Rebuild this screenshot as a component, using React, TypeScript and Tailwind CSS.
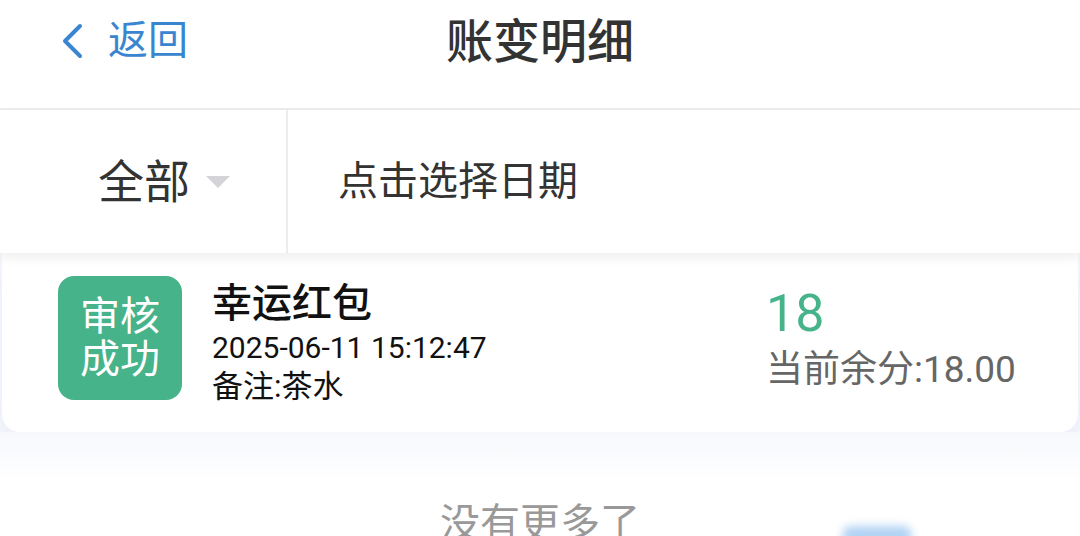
import React from 'react';

const font = { fontFamily: '"Roboto", "Noto Sans CJK SC", sans-serif' };

const record = {
  status: ['审核', '成功'],
  title: '幸运红包',
  time: '2025-06-11 15:12:47',
  note: '茶水',
  amount: '18',
  balance: '18.00',
};

export default function App() {
  return (
    <div
      className="w-[1080px] h-[536px] overflow-hidden bg-white relative"
      style={font}
    >
      {/* header */}
      <div className="h-[110px] flex items-center pb-[26px] border-b-2 border-[#ececec] relative">
        <div className="flex items-center pl-[60px] text-[#3a85d0]">
          <svg width="26" height="36" viewBox="0 0 26 36" fill="none">
            <path
              d="M20 3 L5 18 L20 33"
              stroke="#3a85d0"
              strokeWidth="4"
              strokeLinecap="round"
              strokeLinejoin="round"
            />
          </svg>
          <span className="ml-[22px] text-[40px] leading-none">返回</span>
        </div>
        <div className="absolute inset-0 flex items-center justify-center pb-[26px] pointer-events-none">
          <span className="text-[47px] font-medium text-[#333] leading-none">账变明细</span>
        </div>
      </div>

      {/* filter bar */}
      <div className="h-[143px] flex relative z-10 shadow-[0_6px_10px_rgba(0,0,0,0.06)] bg-white">
        <div className="w-[288px] flex items-center pl-[98px] border-r-2 border-[#ececec]">
          <span className="text-[46px] text-[#333] leading-none">全部</span>
          <span className="ml-[16px] w-0 h-0 border-l-[12px] border-r-[12px] border-t-[12px] border-l-transparent border-r-transparent border-t-[#d4d4d8]" />
        </div>
        <div className="flex-1 flex items-center pl-[50px]">
          <span className="text-[40px] text-[#333] leading-none">点击选择日期</span>
        </div>
      </div>

      {/* list */}
      <div className="bg-[#f6f8fc]">
        <div className="mx-[2px] bg-white rounded-b-[18px] shadow-[0_8px_24px_rgba(110,140,200,0.10)] h-[179px] flex items-start pt-[23px] pl-[56px]">
          <div className="w-[124px] h-[124px] rounded-[16px] bg-[#47b38a] flex flex-col items-center justify-center text-white text-[40px] leading-[43px]">
            {record.status.map((s) => (
              <span key={s}>{s}</span>
            ))}
          </div>
          <div className="ml-[30px] mt-[4px] flex flex-col w-[554px]">
            <span className="text-[40px] font-medium text-[#111] leading-[48px]">
              {record.title}
            </span>
            <span className="text-[30px] text-[#111] leading-[40px]">{record.time}</span>
            <span className="text-[31px] text-[#111] leading-[38px]">
              备注:{record.note}
            </span>
          </div>
          <div className="flex flex-col mt-[8px]">
            <span className="text-[52px] text-[#47b38a] leading-[60px]">{record.amount}</span>
            <span className="text-[37px] text-[#666] leading-[52px]">
              当前余分:{record.balance}
            </span>
          </div>
        </div>
        <div className="h-[120px] bg-gradient-to-b from-[#f6f8fc] to-white to-[40%] flex justify-center pt-[72px]">
          <span className="text-[40px] text-[#999] leading-none">没有更多了</span>
        </div>
      </div>

      {/* floating decoration */}
      <div className="absolute left-[842px] top-[526px] w-[70px] h-[18px] rounded-full bg-[#7fb6ec] blur-[4px] opacity-60" />
    </div>
  );
}
